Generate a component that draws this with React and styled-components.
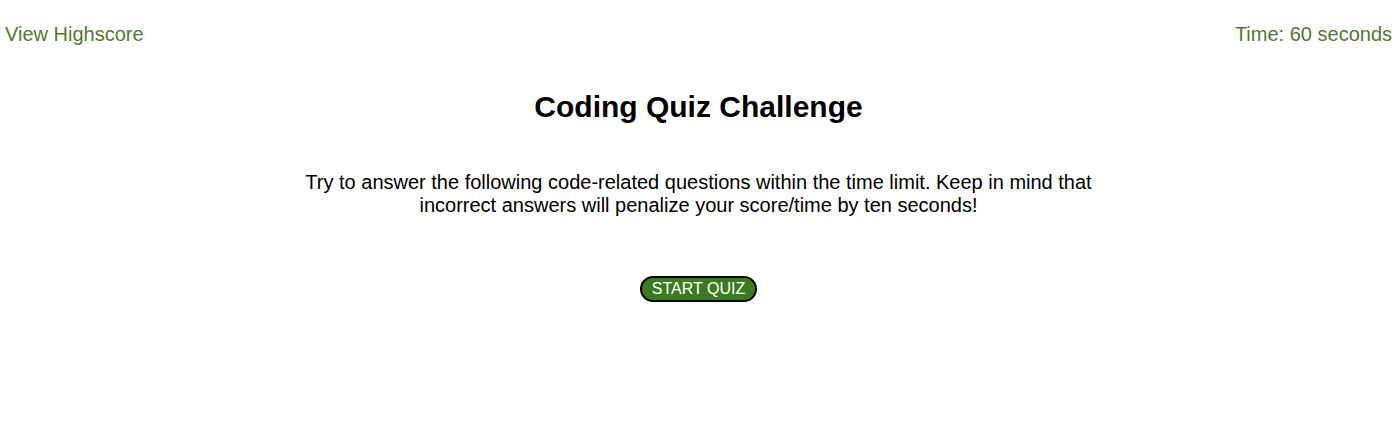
import React from 'react';
import styled, { createGlobalStyle } from 'styled-components';

const GlobalStyle = createGlobalStyle`
  body {
    margin: 0;
    background: #fff;
    font-family: "Liberation Sans", Arial, sans-serif;
  }
`;

const Header = styled.header`
  display: flex;
  justify-content: space-between;
  align-items: center;
  padding: 23px 5px 0 5px;
  font-size: 20px;
  color: #4f7a32;
`;

const HeaderLink = styled.a`
  color: inherit;
  text-decoration: none;
  cursor: pointer;
`;

const Main = styled.main`
  display: flex;
  flex-direction: column;
  align-items: center;
  text-align: center;
`;

const Title = styled.h1`
  font-size: 30px;
  font-weight: bold;
  margin: 44px 0 0 0;
  color: #000;
`;

const Intro = styled.p`
  width: 800px;
  font-size: 20px;
  line-height: 23px;
  margin: 47px 0 0 0;
  color: #000;
`;

const StartButton = styled.button`
  margin-top: 59px;
  padding: 2px 9.5px;
  font-family: "Liberation Sans", Arial, sans-serif;
  font-size: 16px;
  color: #fff;
  background: #3b7a1f;
  border: 2px solid #000;
  border-radius: 14px;
  cursor: pointer;
`;

export default function App() {
  return (
    <>
      <GlobalStyle />
      <Header>
        <HeaderLink>View Highscore</HeaderLink>
        <span>Time: 60 seconds</span>
      </Header>
      <Main>
        <Title>Coding Quiz Challenge</Title>
        <Intro>
          Try to answer the following code-related questions within the time limit. Keep in mind that
          incorrect answers will penalize your score/time by ten seconds!
        </Intro>
        <StartButton>START QUIZ</StartButton>
      </Main>
    </>
  );
}
